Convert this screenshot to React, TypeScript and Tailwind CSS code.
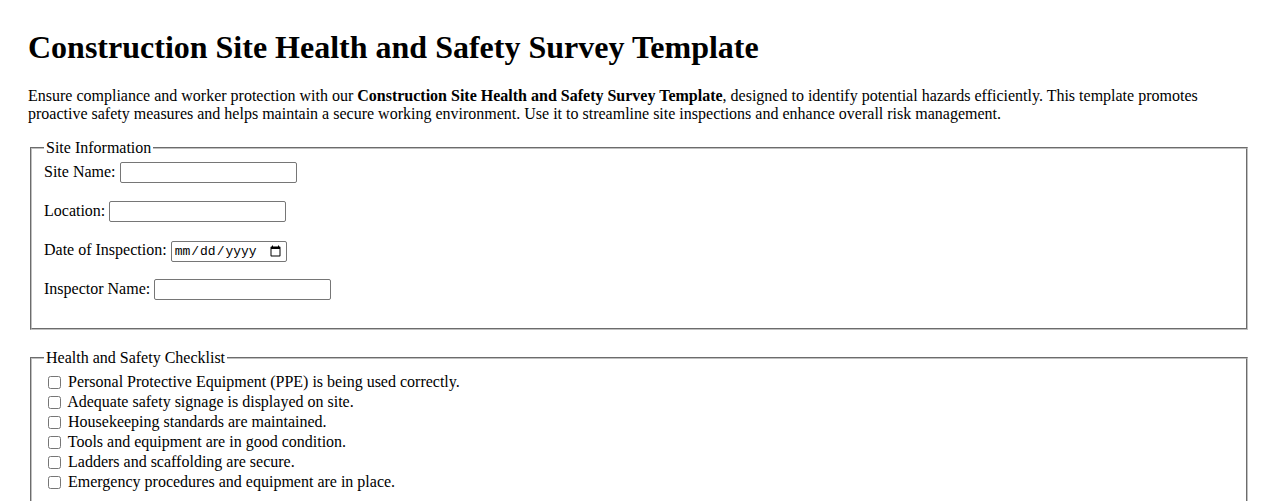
const serif = "font-['Liberation_Serif','Times_New_Roman',serif]";

const inputBase =
  "box-border h-[21px] rounded-[2px] border border-[#767676] bg-white px-[2px] py-[1px] align-baseline";

const checklist = [
  "Personal Protective Equipment (PPE) is being used correctly.",
  "Adequate safety signage is displayed on site.",
  "Housekeeping standards are maintained.",
  "Tools and equipment are in good condition.",
  "Ladders and scaffolding are secure.",
  "Emergency procedures and equipment are in place.",
];

function Field({ label, type = "text", width = "w-[177px]" }: { label: string; type?: string; width?: string }) {
  return (
    <div className="mb-[17px] h-[22px] leading-[21px]">
      <label>
        {label}{" "}
        {type === "date" ? (
          <input
            type="date"
            className={`${inputBase} w-[116px] font-['Liberation_Mono','Courier_New',monospace] text-[13px]`}
          />
        ) : (
          <input
            type={type}
            className={`${inputBase} ${width} font-['Liberation_Sans',Arial,sans-serif] text-[13.33px]`}
          />
        )}
      </label>
    </div>
  );
}

export default function App() {
  return (
    <div className={`${serif} min-h-[501px] bg-white px-[28px] pt-[29px] text-[16px] text-black`}>
      <h1 className="mb-[21px] text-[32px] leading-[37px] font-bold">
        Construction Site Health and Safety Survey Template
      </h1>
      <p className="mb-[16px] leading-[18px]">
        Ensure compliance and worker protection with our{" "}
        <strong className="font-bold">Construction Site Health and Safety Survey Template</strong>, designed to
        identify potential hazards efficiently. This template promotes proactive safety measures and helps maintain a
        secure working environment. Use it to streamline site inspections and enhance overall risk management.
      </p>

      <fieldset className="mx-[2px] mb-[19px] border-2 border-[#c0c0c0] px-[12px] pt-[4px] pb-[11px] [border-style:groove]">
        <legend className="px-[2px] leading-[18px]">Site Information</legend>
        <Field label="Site Name:" />
        <Field label="Location:" />
        <Field label="Date of Inspection:" type="date" />
        <Field label="Inspector Name:" />
      </fieldset>

      <fieldset className="mx-[2px] border-2 border-[#c0c0c0] px-[12px] pt-[5px] pb-[10px] [border-style:groove]">
        <legend className="px-[2px] leading-[18px]">Health and Safety Checklist</legend>
        {checklist.map((item) => (
          <div key={item} className="h-[20px] leading-[20px]">
            <label>
              <input type="checkbox" className="m-[3px_3px_3px_4px] h-[13px] w-[13px] align-[-2px]" /> {item}
            </label>
          </div>
        ))}
      </fieldset>
    </div>
  );
}
